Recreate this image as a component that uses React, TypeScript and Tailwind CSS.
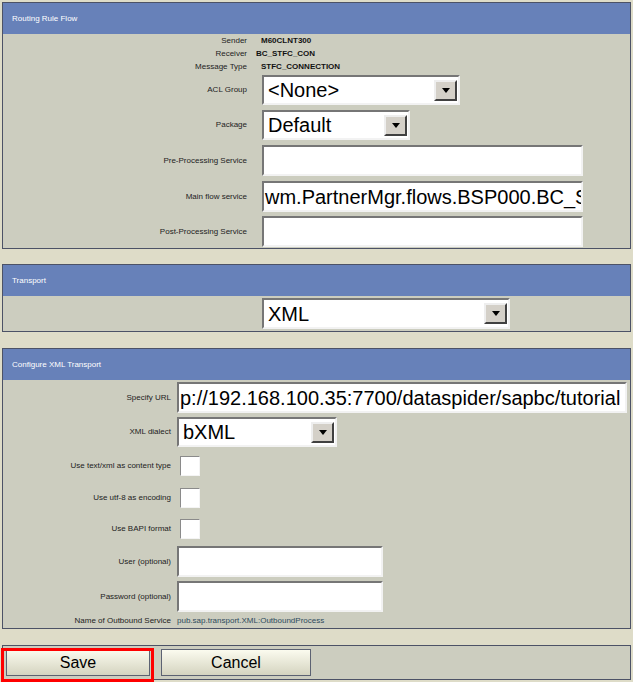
import React from "react";

const font = "font-['Liberation_Sans',Arial,sans-serif]";

function Panel({ title, children }: { title?: string; children: React.ReactNode }) {
  return (
    <div className="w-[629px] border border-[#4c5266] bg-[#cccdbf]">
      {title && (
        <div className="h-[31px] bg-[#6781b9] flex items-center pl-[9px] text-[8px] text-white">
          {title}
        </div>
      )}
      {children}
    </div>
  );
}

function DropButton() {
  return (
    <div className="w-[23px] h-[21px] bg-[#d4d0c8] border-2 border-t-[#eeeeee] border-l-[#eeeeee] border-r-[#404040] border-b-[#404040] flex items-center justify-center">
      <div className="w-0 h-0 border-l-[4px] border-r-[4px] border-t-[5px] border-l-transparent border-r-transparent border-t-black" />
    </div>
  );
}

function Select({ value, size }: { value: string; size: string }) {
  return (
    <div
      className={`${size} flex items-center justify-between bg-white border-2 border-t-[#767676] border-l-[#767676] border-r-[#f2f2f2] border-b-[#f2f2f2] pl-[4px] pr-[1px]`}
    >
      <span className="text-[20px] leading-none text-black">{value}</span>
      <DropButton />
    </div>
  );
}

function TextBox({ value = "", size }: { value?: string; size: string }) {
  return (
    <div
      className={`${size} flex items-center overflow-hidden whitespace-nowrap bg-white border-2 border-t-[#767676] border-l-[#767676] border-r-[#f2f2f2] border-b-[#f2f2f2] pl-[1px]`}
    >
      <span className="text-[20px] leading-none text-black">{value}</span>
    </div>
  );
}

function CheckBox() {
  return (
    <div className="w-[20px] h-[20px] bg-white border border-t-[#8a8a8a] border-l-[#8a8a8a] border-r-[#f4f4f4] border-b-[#f4f4f4]" />
  );
}

function Row({
  label,
  labelWidth,
  gap,
  children,
  className = "",
}: {
  label: string;
  labelWidth: string;
  gap: string;
  children: React.ReactNode;
  className?: string;
}) {
  return (
    <div className={`flex items-center ${className}`}>
      <div className={`${labelWidth} text-right text-[8px] text-[#222]`}>{label}</div>
      <div className={gap}>{children}</div>
    </div>
  );
}

function InfoRow({ label, value, gap }: { label: string; value: string; gap: string }) {
  return (
    <div className="flex items-center h-[13px]">
      <div className="w-[244px] text-right text-[8px] text-[#222]">{label}</div>
      <div className={`${gap} text-[8px] font-bold text-[#111]`}>{value}</div>
    </div>
  );
}

export default function App() {
  const w1 = "w-[244px]";
  const w3 = "w-[168px]";

  return (
    <div className={`${font} w-[633px] h-[682px] bg-[#dedcc8] pl-[2px] pt-[2px] overflow-hidden`}>
      <Panel title="Routing Rule Flow">
        <InfoRow label="Sender" value="M60CLNT300" gap="ml-[14px]" />
        <InfoRow label="Receiver" value="BC_STFC_CON" gap="ml-[9px]" />
        <InfoRow label="Message Type" value="STFC_CONNECTION" gap="ml-[14px]" />
        <Row label="ACL Group" labelWidth={w1} gap="ml-[15px]" className="mt-[2px]">
          <Select value="<None>" size="w-[198px] h-[30px]" />
        </Row>
        <Row label="Package" labelWidth={w1} gap="ml-[15px]" className="mt-[5px]">
          <Select value="Default" size="w-[148px] h-[30px]" />
        </Row>
        <Row label="Pre-Processing Service" labelWidth={w1} gap="ml-[15px]" className="mt-[5px]">
          <TextBox size="w-[321px] h-[31px]" />
        </Row>
        <Row label="Main flow service" labelWidth={w1} gap="ml-[15px]" className="mt-[5px]">
          <TextBox value="wm.PartnerMgr.flows.BSP000.BC_S" size="w-[321px] h-[31px]" />
        </Row>
        <Row label="Post-Processing Service" labelWidth={w1} gap="ml-[15px]" className="mt-[4px] pb-[1px]">
          <TextBox size="w-[321px] h-[31px]" />
        </Row>
      </Panel>

      <div className="mt-[15px]">
        <Panel title="Transport">
          <div className="pt-[2px] pb-[2px] pl-[259px]">
            <Select value="XML" size="w-[248px] h-[31px]" />
          </div>
        </Panel>
      </div>

      <div className="mt-[16px]">
        <Panel title="Configure XML Transport">
          <Row label="Specify URL" labelWidth={w3} gap="ml-[6px]" className="pt-[2px]">
            <TextBox value="p://192.168.100.35:7700/dataspider/sapbc/tutorial" size="w-[450px] h-[31px]" />
          </Row>
          <Row label="XML dialect" labelWidth={w3} gap="ml-[6px]" className="mt-[4px]">
            <Select value="bXML" size="w-[160px] h-[30px]" />
          </Row>
          <Row label="Use text/xml as content type" labelWidth={w3} gap="ml-[9px]" className="mt-[9px]">
            <CheckBox />
          </Row>
          <Row label="Use utf-8 as encoding" labelWidth={w3} gap="ml-[9px]" className="mt-[12px]">
            <CheckBox />
          </Row>
          <Row label="Use BAPI format" labelWidth={w3} gap="ml-[9px]" className="mt-[11px]">
            <CheckBox />
          </Row>
          <Row label="User (optional)" labelWidth={w3} gap="ml-[6px]" className="mt-[7px]">
            <TextBox size="w-[206px] h-[31px]" />
          </Row>
          <Row label="Password (optional)" labelWidth={w3} gap="ml-[6px]" className="mt-[4px]">
            <TextBox size="w-[206px] h-[31px]" />
          </Row>
          <div className="flex items-center h-[12px] mt-[3px] pb-[1px] box-content">
            <div className={`${w3} text-right text-[8px] text-[#222]`}>Name of Outbound Service</div>
            <div className="ml-[6px] text-[8px] text-[#2c4a5c]">pub.sap.transport.XML:OutboundProcess</div>
          </div>
        </Panel>
      </div>

      <div className="mt-[16px]">
        <Panel>
          <div className="flex pt-[3px] pb-[3px] pl-[3px] gap-[11px]">
            <div className="relative">
              <button className="w-[144px] h-[27px] bg-gradient-to-b from-[#fbfbef] to-[#d5d4c0] border border-[#5c6272] text-[16px] text-black leading-none">
                Save
              </button>
              <div className="absolute left-[-5px] top-[-1px] right-[-4px] bottom-[-6px] border-[3px] border-[#ff0000] pointer-events-none" />
            </div>
            <button className="w-[150px] h-[27px] bg-gradient-to-b from-[#fbfbef] to-[#d5d4c0] border border-[#5c6272] text-[16px] text-black leading-none">
              Cancel
            </button>
          </div>
        </Panel>
      </div>
    </div>
  );
}
